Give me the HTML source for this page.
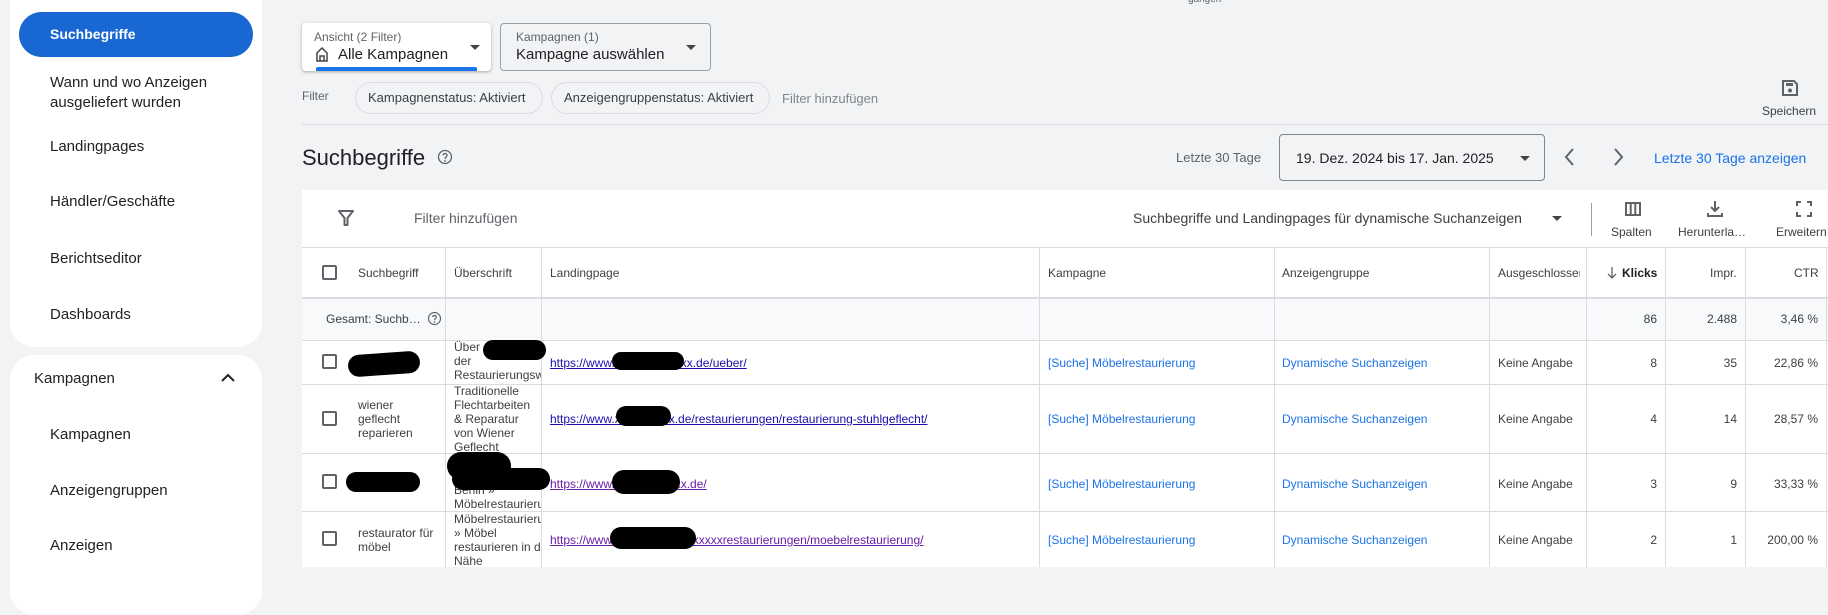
<!DOCTYPE html>
<html><head><meta charset="utf-8"><style>
*{box-sizing:border-box;margin:0;padding:0}
body{width:1828px;height:567px;overflow:hidden;background:#f1f3f4;font-family:"Liberation Sans",sans-serif;color:#202124;position:relative}
.a{position:absolute;white-space:nowrap}
.card{position:absolute;background:#fff;border-radius:24px}
.nav{position:absolute;left:50px;font-size:15px;color:#202124}
.box{position:absolute;border:1px solid #9aa0a6;border-radius:4px}
.chip{position:absolute;border:1px solid #dadce0;border-radius:16px;font-size:13px;color:#3c4043;height:32px;line-height:30px;padding:0 12px}
.tri{position:absolute;width:0;height:0;border-left:5px solid transparent;border-right:5px solid transparent;border-top:5px solid #444}
.vl{position:absolute;width:1px;background:#dadce0}
.hl{position:absolute;height:1px;background:#dadce0;left:302px;right:0}
.t{position:absolute;font-size:12px;color:#3c4043;white-space:nowrap}
.ub{position:absolute;left:454px;width:87px;overflow:hidden;font-size:12px;color:#3c4043;line-height:14px;white-space:nowrap}
.lk{color:#1a73e8}
.url{color:#1a0dab;text-decoration:underline}
.cb{position:absolute;left:322px;width:15px;height:15px;border:2px solid #5f6368;border-radius:2px}
.blk{position:absolute;background:#000;border-radius:12px}
.r{text-align:right}
</style></head><body>
<div class="card" style="left:10px;top:-24px;width:252px;height:371px"></div>
<div class="card" style="left:10px;top:355px;width:252px;height:260px"></div>
<div class="a" style="left:19px;top:12px;width:234px;height:45px;background:#1967d2;border-radius:23px"></div>
<div class="nav" style="top:26px;color:#fff;font-weight:bold;font-size:14px">Suchbegriffe</div>
<div class="nav" style="top:73px;line-height:20px">Wann und wo Anzeigen<br>ausgeliefert wurden</div>
<div class="nav" style="top:138px">Landingpages</div>
<div class="nav" style="top:193px">Händler/Geschäfte</div>
<div class="nav" style="top:250px">Berichtseditor</div>
<div class="nav" style="top:306px">Dashboards</div>
<div class="nav" style="top:370px;left:34px">Kampagnen</div>
<svg class="a" style="left:220px;top:372px" width="16" height="12"><path d="M2 9 L8 3 L14 9" stroke="#202124" stroke-width="2" fill="none"/></svg>
<div class="nav" style="top:426px">Kampagnen</div>
<div class="nav" style="top:482px">Anzeigengruppen</div>
<div class="nav" style="top:537px">Anzeigen</div>

<div class="a" style="left:1188px;top:-6px;font-size:10px;color:#5f6368">gangen</div>
<div class="a" style="left:302px;top:23px;width:189px;height:48px;background:#fff;border-radius:4px;box-shadow:0 1px 3px rgba(0,0,0,.3)"></div>
<div class="a" style="left:314px;top:30px;font-size:12px;color:#5f6368">Ansicht (2 Filter)</div>
<svg class="a" style="left:316px;top:47px" width="12" height="15"><path d="M1 6 L6 1 L11 6 V14 H1 Z M4 14 V9 H8 V14" stroke="#444" stroke-width="1.5" fill="none"/></svg>
<div class="a" style="left:338px;top:46px;font-size:15px">Alle Kampagnen</div>
<div class="tri" style="left:470px;top:45px"></div>
<div class="a" style="left:316px;top:67px;width:161px;height:4px;background:#1a73e8;border-radius:2px 2px 0 0"></div>
<div class="box" style="left:500px;top:23px;width:211px;height:48px"></div>
<div class="a" style="left:516px;top:30px;font-size:12px;color:#5f6368">Kampagnen (1)</div>
<div class="a" style="left:516px;top:46px;font-size:15px">Kampagne auswählen</div>
<div class="tri" style="left:686px;top:45px"></div>
<div class="a" style="left:302px;top:89px;font-size:12px;color:#5f6368">Filter</div>
<div class="chip" style="left:355px;top:82px;width:188px">Kampagnenstatus: Aktiviert</div>
<div class="chip" style="left:551px;top:82px;width:219px">Anzeigengruppenstatus: Aktiviert</div>
<div class="a" style="left:782px;top:91px;font-size:13px;color:#80868b">Filter hinzufügen</div>
<svg class="a" style="left:1780px;top:78px" width="20" height="20"><path d="M3 3 H14 L17 6 V17 H3 Z" stroke="#5f6368" stroke-width="2" fill="none"/><rect x="6" y="5" width="7" height="3" fill="#5f6368"/><circle cx="10" cy="12.5" r="2" fill="#5f6368"/></svg>
<div class="a" style="left:1762px;top:104px;font-size:12px;color:#3c4043">Speichern</div>
<div class="a" style="left:302px;top:124px;right:0;height:1px;background:#dadce0"></div>

<div class="a" style="left:302px;top:145px;font-size:22px">Suchbegriffe</div>
<svg class="a" style="left:437px;top:149px" width="16" height="16"><circle cx="8" cy="8" r="6.5" stroke="#5f6368" stroke-width="1.3" fill="none"/><path d="M6 6.3 C6 4 10 4 10 6.3 C10 8 8 8 8 10" stroke="#5f6368" stroke-width="1.3" fill="none"/><circle cx="8" cy="12" r=".9" fill="#5f6368"/></svg>
<div class="a" style="left:1176px;top:150px;font-size:13px;color:#5f6368">Letzte 30 Tage</div>
<div class="box" style="left:1279px;top:134px;width:266px;height:47px;border-color:#80868b"></div>
<div class="a" style="left:1296px;top:150px;font-size:14px">19. Dez. 2024 bis 17. Jan. 2025</div>
<div class="tri" style="left:1520px;top:156px"></div>
<svg class="a" style="left:1562px;top:146px" width="16" height="22"><path d="M11 3 L4 11 L11 19" stroke="#5f6368" stroke-width="2" fill="none"/></svg>
<svg class="a" style="left:1610px;top:146px" width="16" height="22"><path d="M5 3 L12 11 L5 19" stroke="#5f6368" stroke-width="2" fill="none"/></svg>
<div class="a" style="left:1654px;top:150px;font-size:14px;color:#1a73e8">Letzte 30 Tage anzeigen</div>

<div class="a" style="left:302px;top:190px;right:0;bottom:0;background:#fff"></div>
<svg class="a" style="left:337px;top:209px" width="18" height="18"><path d="M2 2 H16 L10.5 9 V16 H7.5 V9 Z" stroke="#5f6368" stroke-width="2" fill="none" stroke-linejoin="round"/></svg>
<div class="a" style="left:414px;top:210px;font-size:14px;color:#5f6368">Filter hinzufügen</div>
<div class="a" style="left:1133px;top:210px;font-size:14px;color:#3c4043">Suchbegriffe und Landingpages für dynamische Suchanzeigen</div>
<div class="tri" style="left:1552px;top:216px"></div>
<div class="vl" style="left:1591px;top:203px;height:33px;background:#9aa0a6"></div>
<svg class="a" style="left:1624px;top:201px" width="18" height="16"><path d="M2 2 H16 V14 H2 Z M6.7 2 V14 M11.3 2 V14" stroke="#5f6368" stroke-width="2" fill="none"/></svg>
<div class="a" style="left:1611px;top:225px;font-size:12px;color:#3c4043">Spalten</div>
<svg class="a" style="left:1706px;top:200px" width="18" height="18"><path d="M9 1 V11 M5 7 L9 11 L13 7 M2 13 V16 H16 V13" stroke="#5f6368" stroke-width="2" fill="none"/></svg>
<div class="a" style="left:1678px;top:225px;font-size:12px;color:#3c4043">Herunterla…</div>
<svg class="a" style="left:1796px;top:201px" width="16" height="16"><path d="M1 5 V1 H5 M11 1 H15 V5 M15 11 V15 H11 M5 15 H1 V11" stroke="#5f6368" stroke-width="2" fill="none"/></svg>
<div class="a" style="left:1776px;top:225px;font-size:12px;color:#3c4043">Erweitern</div>

<div class="hl" style="top:247px"></div>
<div class="a" style="left:302px;top:297px;right:0;height:43px;background:#f8f9fa"></div>
<div class="hl" style="top:297px;height:2px"></div>
<div class="hl" style="top:340px"></div>
<div class="hl" style="top:384px"></div>
<div class="hl" style="top:453px"></div>
<div class="hl" style="top:511px"></div>
<div class="vl" style="left:445px;top:247px;height:320px"></div>
<div class="vl" style="left:541px;top:247px;height:320px"></div>
<div class="vl" style="left:1039px;top:247px;height:320px"></div>
<div class="vl" style="left:1274px;top:247px;height:320px"></div>
<div class="vl" style="left:1489px;top:247px;height:320px"></div>
<div class="vl" style="left:1586px;top:247px;height:320px"></div>
<div class="vl" style="left:1665px;top:247px;height:320px"></div>
<div class="vl" style="left:1745px;top:247px;height:320px"></div>
<div class="vl" style="left:1826px;top:247px;height:320px"></div>

<div class="cb" style="top:265px"></div>
<div class="t" style="left:358px;top:266px">Suchbegriff</div>
<div class="t" style="left:454px;top:266px">Überschrift</div>
<div class="t" style="left:550px;top:266px">Landingpage</div>
<div class="t" style="left:1048px;top:266px">Kampagne</div>
<div class="t" style="left:1282px;top:266px">Anzeigengruppe</div>
<div class="t" style="left:1498px;top:266px;width:82px;overflow:hidden">Ausgeschlossen</div>
<svg class="a" style="left:1607px;top:266px" width="10" height="14"><path d="M5 1 V12 M1 8 L5 12 L9 8" stroke="#5f6368" stroke-width="1.3" fill="none"/></svg>
<div class="t" style="left:1622px;top:266px;font-weight:bold;color:#202124">Klicks</div>
<div class="t" style="left:1710px;top:266px">Impr.</div>
<div class="t" style="left:1794px;top:266px">CTR</div>

<div class="t" style="left:326px;top:312px">Gesamt: Suchb…</div>
<svg class="a" style="left:427px;top:311px" width="15" height="15"><circle cx="7.5" cy="7.5" r="6" stroke="#5f6368" stroke-width="1.2" fill="none"/><path d="M5.7 6 C5.7 4 9.3 4 9.3 6 C9.3 7.5 7.5 7.5 7.5 9.3" stroke="#5f6368" stroke-width="1.2" fill="none"/><circle cx="7.5" cy="11" r=".8" fill="#5f6368"/></svg>
<div class="t r" style="left:1586px;width:71px;top:312px">86</div>
<div class="t r" style="left:1665px;width:72px;top:312px">2.488</div>
<div class="t r" style="left:1745px;width:73px;top:312px">3,46 %</div>

<!-- row1 -->
<div class="cb" style="top:354px"></div>
<div class="blk" style="left:348px;top:353px;width:72px;height:22px;transform:rotate(-4deg)"></div>
<div class="ub" style="top:340px">Über<br>der<br>Restaurierungswerkstatt</div>
<div class="blk" style="left:483px;top:340px;width:63px;height:20px"></div>
<div class="t url" style="left:550px;top:356px">https://www.xxxxxxxxxxxxx.de/ueber/</div>
<div class="blk" style="left:612px;top:352px;width:72px;height:18px"></div>
<div class="t lk" style="left:1048px;top:356px">[Suche] Möbelrestaurierung</div>
<div class="t lk" style="left:1282px;top:356px">Dynamische Suchanzeigen</div>
<div class="t" style="left:1498px;top:356px">Keine Angabe</div>
<div class="t r" style="left:1586px;width:71px;top:356px">8</div>
<div class="t r" style="left:1665px;width:72px;top:356px">35</div>
<div class="t r" style="left:1745px;width:73px;top:356px">22,86 %</div>

<!-- row2 -->
<div class="cb" style="top:411px"></div>
<div class="t" style="left:358px;top:398px;line-height:14px">wiener<br>geflecht<br>reparieren</div>
<div class="ub" style="top:384px">Traditionelle<br>Flechtarbeiten<br>&amp; Reparatur<br>von Wiener<br>Geflecht</div>
<div class="t url" style="left:550px;top:412px">https://www.xxxxxxxxxx.de/restaurierungen/restaurierung-stuhlgeflecht/</div>
<div class="blk" style="left:616px;top:406px;width:55px;height:20px"></div>
<div class="t lk" style="left:1048px;top:412px">[Suche] Möbelrestaurierung</div>
<div class="t lk" style="left:1282px;top:412px">Dynamische Suchanzeigen</div>
<div class="t" style="left:1498px;top:412px">Keine Angabe</div>
<div class="t r" style="left:1586px;width:71px;top:412px">4</div>
<div class="t r" style="left:1665px;width:72px;top:412px">14</div>
<div class="t r" style="left:1745px;width:73px;top:412px">28,57 %</div>

<!-- row3 -->
<div class="cb" style="top:474px"></div>
<div class="blk" style="left:346px;top:472px;width:74px;height:20px"></div>
<div class="ub" style="top:483px">Berlin »<br>Möbelrestaurierung</div>
<div class="blk" style="left:447px;top:452px;width:64px;height:28px;border-radius:14px"></div>
<div class="blk" style="left:452px;top:468px;width:98px;height:22px"></div>
<div class="t url" style="left:550px;top:477px;color:#681da8">https://www.xxxxxxxxxxxx.de/</div>
<div class="blk" style="left:612px;top:470px;width:68px;height:24px"></div>
<div class="t lk" style="left:1048px;top:477px">[Suche] Möbelrestaurierung</div>
<div class="t lk" style="left:1282px;top:477px">Dynamische Suchanzeigen</div>
<div class="t" style="left:1498px;top:477px">Keine Angabe</div>
<div class="t r" style="left:1586px;width:71px;top:477px">3</div>
<div class="t r" style="left:1665px;width:72px;top:477px">9</div>
<div class="t r" style="left:1745px;width:73px;top:477px">33,33 %</div>

<!-- row4 -->
<div class="cb" style="top:531px"></div>
<div class="t" style="left:358px;top:526px;line-height:14px">restaurator für<br>möbel</div>
<div class="ub" style="top:512px">Möbelrestaurierung<br>» Möbel<br>restaurieren in der<br>Nähe</div>
<div class="t url" style="left:550px;top:533px;color:#681da8">https://www.xxxxxxxxxxxxxxxxxxrestaurierungen/moebelrestaurierung/</div>
<div class="blk" style="left:610px;top:527px;width:86px;height:22px"></div>
<div class="t lk" style="left:1048px;top:533px">[Suche] Möbelrestaurierung</div>
<div class="t lk" style="left:1282px;top:533px">Dynamische Suchanzeigen</div>
<div class="t" style="left:1498px;top:533px">Keine Angabe</div>
<div class="t r" style="left:1586px;width:71px;top:533px">2</div>
<div class="t r" style="left:1665px;width:72px;top:533px">1</div>
<div class="t r" style="left:1745px;width:73px;top:533px">200,00 %</div>
</body></html>
